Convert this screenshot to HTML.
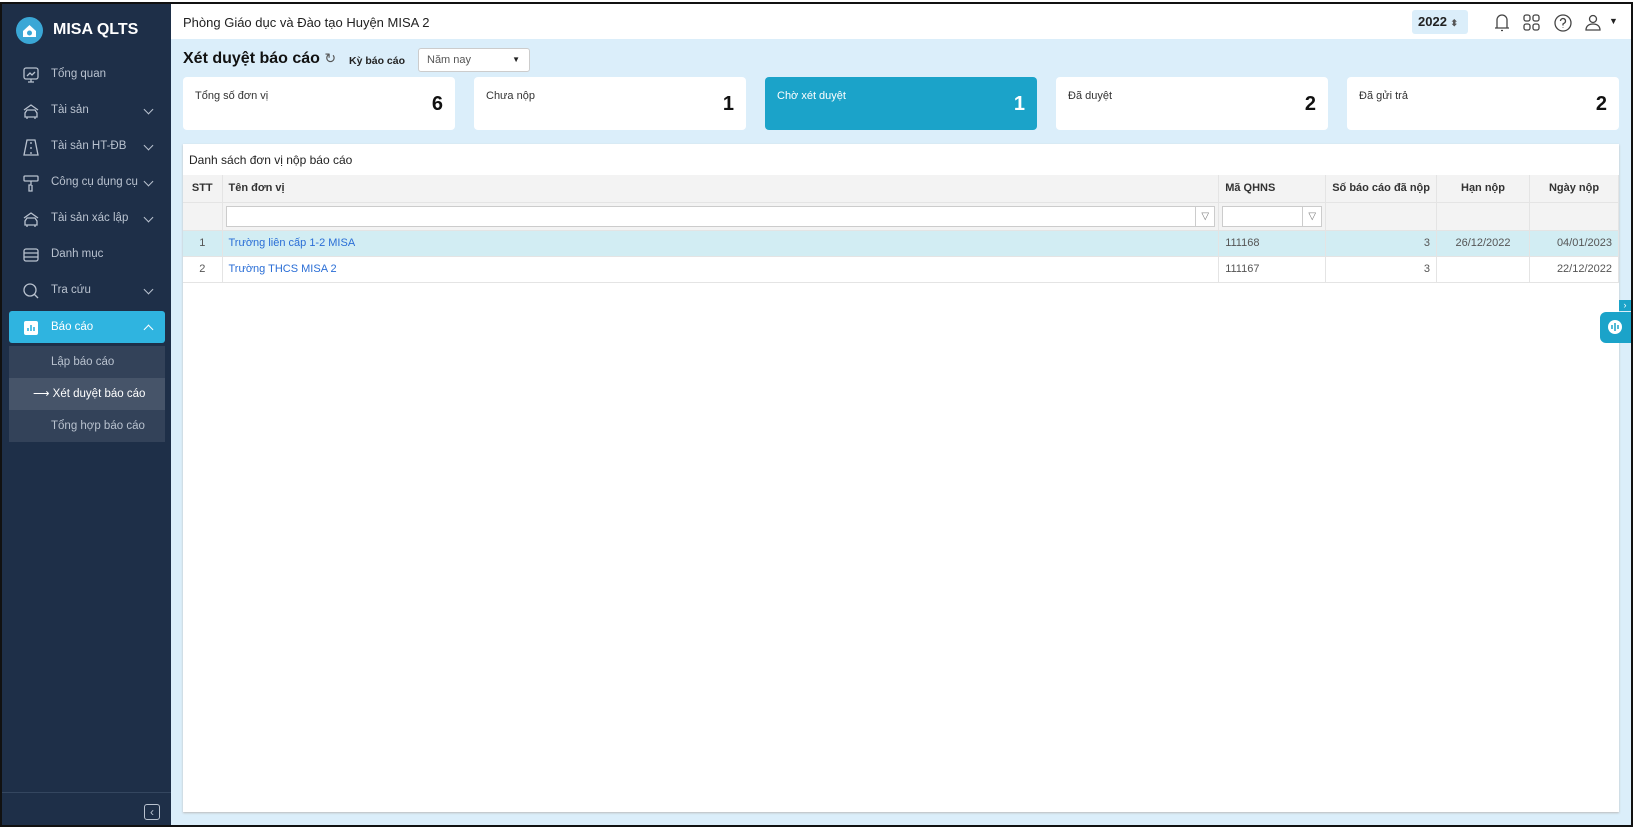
<!DOCTYPE html>
<html><head><meta charset="utf-8"><style>
*{box-sizing:border-box;margin:0;padding:0}
body{width:1636px;height:830px;background:#fff;font-family:"Liberation Sans",sans-serif;position:relative;overflow:hidden}
.frame{position:absolute;left:0;top:2px;width:1633px;height:825px;border:2px solid #111;background:#dbeefa;overflow:hidden}
.side{position:absolute;left:0;top:0;width:169px;height:100%;background:#1e2f48;color:#b9c2cf;font-size:11.5px}
.logo{position:absolute;left:14px;top:13px;width:27px;height:27px;border-radius:50%;background:#3aa7d6}
.brand{position:absolute;left:51px;top:17px;color:#fff;font-weight:bold;font-size:16px}
.it{position:absolute;left:7px;width:156px;height:32px;line-height:32px;padding-left:42px}
.it svg.ic{position:absolute;left:13px;top:8px}
.chev{position:absolute;left:136px;top:12px;width:7px;height:7px;border-right:1.5px solid #b9c2cf;border-bottom:1.5px solid #b9c2cf;transform:rotate(45deg)}
.act{background:#2fb4e0;color:#fff;border-radius:3px}
.sub{position:absolute;left:7px;top:342px;width:156px;height:96px;background:#334259}
.sub div{height:32px;line-height:32px;padding-left:42px}
.hdr{position:absolute;left:169px;top:0;right:0;height:35px;background:#fff;font-size:13px;color:#222}
.ttl{position:absolute;left:181px;top:46px;font-size:16px;font-weight:bold;color:#111}
.card{position:absolute;top:73px;width:272px;height:53px;background:#fff;border-radius:4px;font-size:11px;color:#333}
.card span{position:absolute;left:12px;top:13px}
.card b{position:absolute;right:12px;top:16px;font-size:20px;color:#111}
.card.on{background:#1ba3c9;color:#fff}.card.on b{color:#fff}
.panel{position:absolute;left:181px;top:140px;width:1436px;height:668px;background:#fff;box-shadow:0 1px 2px #bbb}
table{position:absolute;left:0;top:31px;width:1436px;border-collapse:collapse;font-size:11px;color:#555}
td,th{border-right:1px solid #e4e4e4;border-bottom:1px solid #e4e4e4;height:26px;padding:0 6px;white-space:nowrap}
th{background:#f3f3f3;color:#333;font-weight:bold;height:27px}
.f td{background:#f3f3f3;height:28px}
a{color:#2a6ed6;text-decoration:none}
.inp{height:21px;border:1px solid #ccc;background:#fff;position:relative}
.inp i{position:absolute;right:0;top:0;width:19px;height:19px;border-left:1px solid #ccc;font-style:normal;font-size:10px;text-align:center;line-height:19px;color:#777}
</style></head><body><div class="frame">
<div class="side">
<div class="logo"><svg width="27" height="27"><path d="M7 14 L13.5 8 L20 14 V20 H7Z" fill="#fff"/><circle cx="13.5" cy="16" r="2.5" fill="#3aa7d6"/></svg></div>
<div class="brand">MISA QLTS</div>
<div class="it" style="top:54px"><svg class="ic" width="18" height="18" fill="none" stroke="#b9c2cf" stroke-width="1.3"><rect x="2" y="2" width="14" height="11" rx="2"/><path d="M9 13v3M6 16h6M5 10l3-3 2 2 3-3"/></svg>Tổng quan</div>
<div class="it" style="top:90px"><svg class="ic" width="18" height="18" fill="none" stroke="#b9c2cf" stroke-width="1.3"><path d="M2 8l7-5 7 5M3 15v-4l2-3h8l2 3v4zM5 15v2M13 15v2"/></svg>Tài sản<i class="chev"></i></div>
<div class="it" style="top:126px"><svg class="ic" width="18" height="18" fill="none" stroke="#b9c2cf" stroke-width="1.3"><path d="M5 2L2 17h14L13 2zM9 4v2M9 9v2M9 14v2"/></svg>Tài sản HT-ĐB<i class="chev"></i></div>
<div class="it" style="top:162px"><svg class="ic" width="18" height="18" fill="none" stroke="#b9c2cf" stroke-width="1.3"><rect x="2" y="2" width="14" height="5" rx="1"/><path d="M9 7v4h-2v6h3v-6"/></svg>Công cụ dụng cụ<i class="chev"></i></div>
<div class="it" style="top:198px"><svg class="ic" width="18" height="18" fill="none" stroke="#b9c2cf" stroke-width="1.3"><path d="M2 8l7-5 7 5M3 15v-4l2-3h8l2 3v4zM5 15v2M13 15v2"/></svg>Tài sản xác lập<i class="chev"></i></div>
<div class="it" style="top:234px"><svg class="ic" width="18" height="18" fill="none" stroke="#b9c2cf" stroke-width="1.3"><rect x="2" y="3" width="14" height="12" rx="2"/><path d="M2 7h14M2 11h14"/></svg>Danh mục</div>
<div class="it" style="top:270px"><svg class="ic" width="18" height="18" fill="none" stroke="#b9c2cf" stroke-width="1.3"><circle cx="8" cy="8" r="6"/><path d="M12 12l4 4"/></svg>Tra cứu<i class="chev"></i></div>
<div class="it act" style="top:307px"><svg class="ic" width="18" height="18"><rect x="2" y="2" width="14" height="14" rx="2" fill="#fff"/><path d="M6 12V9M9 12V6M12 12V8" stroke="#2fb4e0" stroke-width="1.6"/></svg>Báo cáo<i class="chev" style="border-color:#fff;transform:rotate(225deg);top:15px"></i></div>
<div class="sub"><div>Lập báo cáo</div><div style="background:#465469;color:#fff;padding-left:24px">⟶ Xét duyệt báo cáo</div><div>Tổng hợp báo cáo</div></div>
<div style="position:absolute;left:0;right:0;top:788px;border-top:1px solid #34465f"></div>
<div style="position:absolute;left:142px;top:800px;width:16px;height:16px;border:1px solid #b9c2cf;border-radius:3px;color:#b9c2cf;font-size:12px;line-height:14px;text-align:center">‹</div>
</div>
<div class="hdr"><span style="position:absolute;left:12px;top:11px">Phòng Giáo dục và Đào tạo Huyện MISA 2</span>
<div style="position:absolute;left:1241px;top:6px;width:56px;height:24px;background:#dbeefa;border-radius:3px;font-weight:bold;line-height:24px;padding-left:6px;font-size:13px">2022 <span style="font-size:9px;color:#555">⬍</span></div>
<svg style="position:absolute;left:1322px;top:7px" width="110" height="24" fill="none" stroke="#444" stroke-width="1.3"><path d="M2 17h14M4 17V9a5 5 0 0110 0v8M8 19.5h2"/><rect x="31" y="4" width="6" height="6" rx="2"/><rect x="40" y="4" width="6" height="6" rx="2"/><rect x="31" y="13" width="6" height="6" rx="2"/><rect x="40" y="13" width="6" height="6" rx="2"/><circle cx="70" cy="12" r="8"/><path d="M67.5 10a2.5 2.5 0 114 2l-1.5 1v1.5M70 16.5v.5"/><circle cx="100" cy="8" r="3.5"/><path d="M93 19c0-4 3-6 7-6s7 2 7 6z"/></svg>
<span style="position:absolute;left:1438px;top:12px;font-size:9px">▼</span></div>
<div class="ttl">Xét duyệt báo cáo <span style="font-weight:normal;font-size:14px;color:#555">↻</span></div>
<div style="position:absolute;left:347px;top:51px;font-size:10.5px;font-weight:bold;color:#222">Kỳ báo cáo</div>
<div style="position:absolute;left:416px;top:44px;width:112px;height:24px;background:#fff;border:1px solid #ccc;border-radius:3px;font-size:11px;color:#555;line-height:22px;padding-left:8px">Năm nay<span style="position:absolute;right:9px;font-size:8px;color:#222">▼</span></div>
<div class="card" style="left:181px"><span>Tổng số đơn vị</span><b>6</b></div>
<div class="card" style="left:472px"><span>Chưa nộp</span><b>1</b></div>
<div class="card on" style="left:763px"><span>Chờ xét duyệt</span><b>1</b></div>
<div class="card" style="left:1054px"><span>Đã duyệt</span><b>2</b></div>
<div class="card" style="left:1345px"><span>Đã gửi trả</span><b>2</b></div>
<div class="panel"><div style="position:absolute;left:6px;top:9px;font-size:12px;color:#222">Danh sách đơn vị nộp báo cáo</div>
<table>
<tr><th style="width:39px">STT</th><th style="text-align:left">Tên đơn vị</th><th style="width:107px;text-align:left">Mã QHNS</th><th style="width:108px;text-align:right">Số báo cáo đã nộp</th><th style="width:93px">Hạn nộp</th><th style="width:89px;text-align:center">Ngày nộp</th></tr>
<tr class="f"><td></td><td style="padding:0 3px"><div class="inp"><i>▽</i></div></td><td style="padding:0 3px"><div class="inp"><i>▽</i></div></td><td></td><td></td><td></td></tr>
<tr style="background:#d2edf3"><td style="text-align:center">1</td><td><a>Trường liên cấp 1-2 MISA</a></td><td>111168</td><td style="text-align:right">3</td><td style="text-align:center">26/12/2022</td><td style="text-align:right">04/01/2023</td></tr>
<tr><td style="text-align:center">2</td><td><a>Trường THCS MISA 2</a></td><td>111167</td><td style="text-align:right">3</td><td></td><td style="text-align:right">22/12/2022</td></tr>
</table></div>
<div style="position:absolute;left:1617px;top:296px;width:12px;height:11px;background:#1ba3c9;color:#fff;font-size:9px;text-align:center;line-height:11px">›</div>
<div style="position:absolute;left:1598px;top:308px;width:32px;height:31px;background:#1ba3c9;border-radius:6px 0 0 6px"><svg width="32" height="31"><circle cx="15" cy="15" r="7" fill="#fff"/><path d="M12 13v4M15 11v8M18 13v4" stroke="#1ba3c9" stroke-width="1.5"/></svg></div>
</div></body></html>
